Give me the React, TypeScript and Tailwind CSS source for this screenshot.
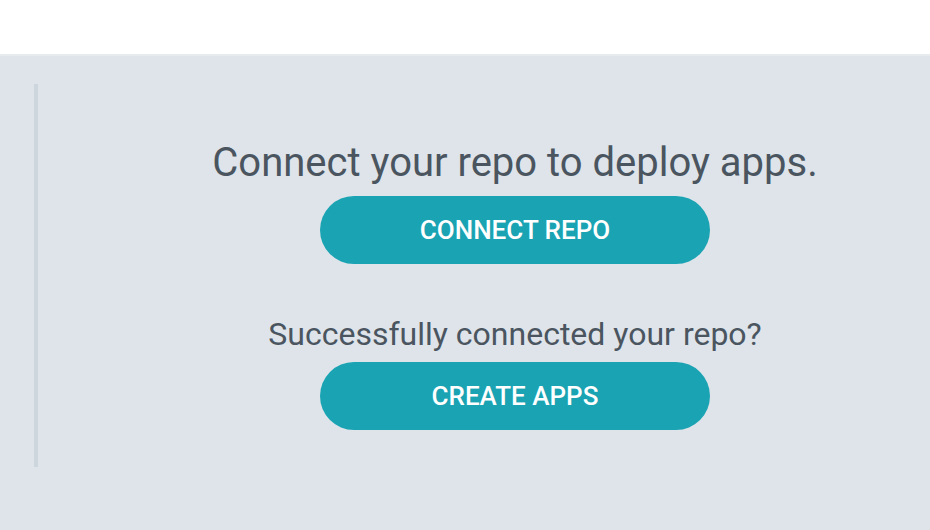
import React from "react";

export default function App() {
  return (
    <div
      className="w-[930px] h-[530px] bg-[#dee4ea] flex flex-col overflow-hidden"
      style={{ fontFamily: "Roboto, 'Liberation Sans', sans-serif" }}
    >
      <div className="h-[56px] bg-white border-b-2 border-[#e7ebee] shrink-0" />
      <div className="mt-[28px] ml-[34px] h-[383px] border-l-4 border-[#ccd6dc] flex flex-col items-center pl-[62px] pt-[56px]">
        <h1 className="text-[40px] leading-[46px] text-[#4a5560] font-normal">
          Connect your repo to deploy apps.
        </h1>
        <button className="mt-[10px] w-[390px] h-[68px] rounded-full bg-[#1aa3b3] text-white text-[26px] font-medium uppercase">
          Connect Repo
        </button>
        <p className="mt-[52px] text-[32px] leading-[36px] text-[#4a5560]">
          Successfully connected your repo?
        </p>
        <button className="mt-[10px] w-[390px] h-[68px] rounded-full bg-[#1aa3b3] text-white text-[26px] font-medium uppercase">
          Create Apps
        </button>
      </div>
    </div>
  );
}
